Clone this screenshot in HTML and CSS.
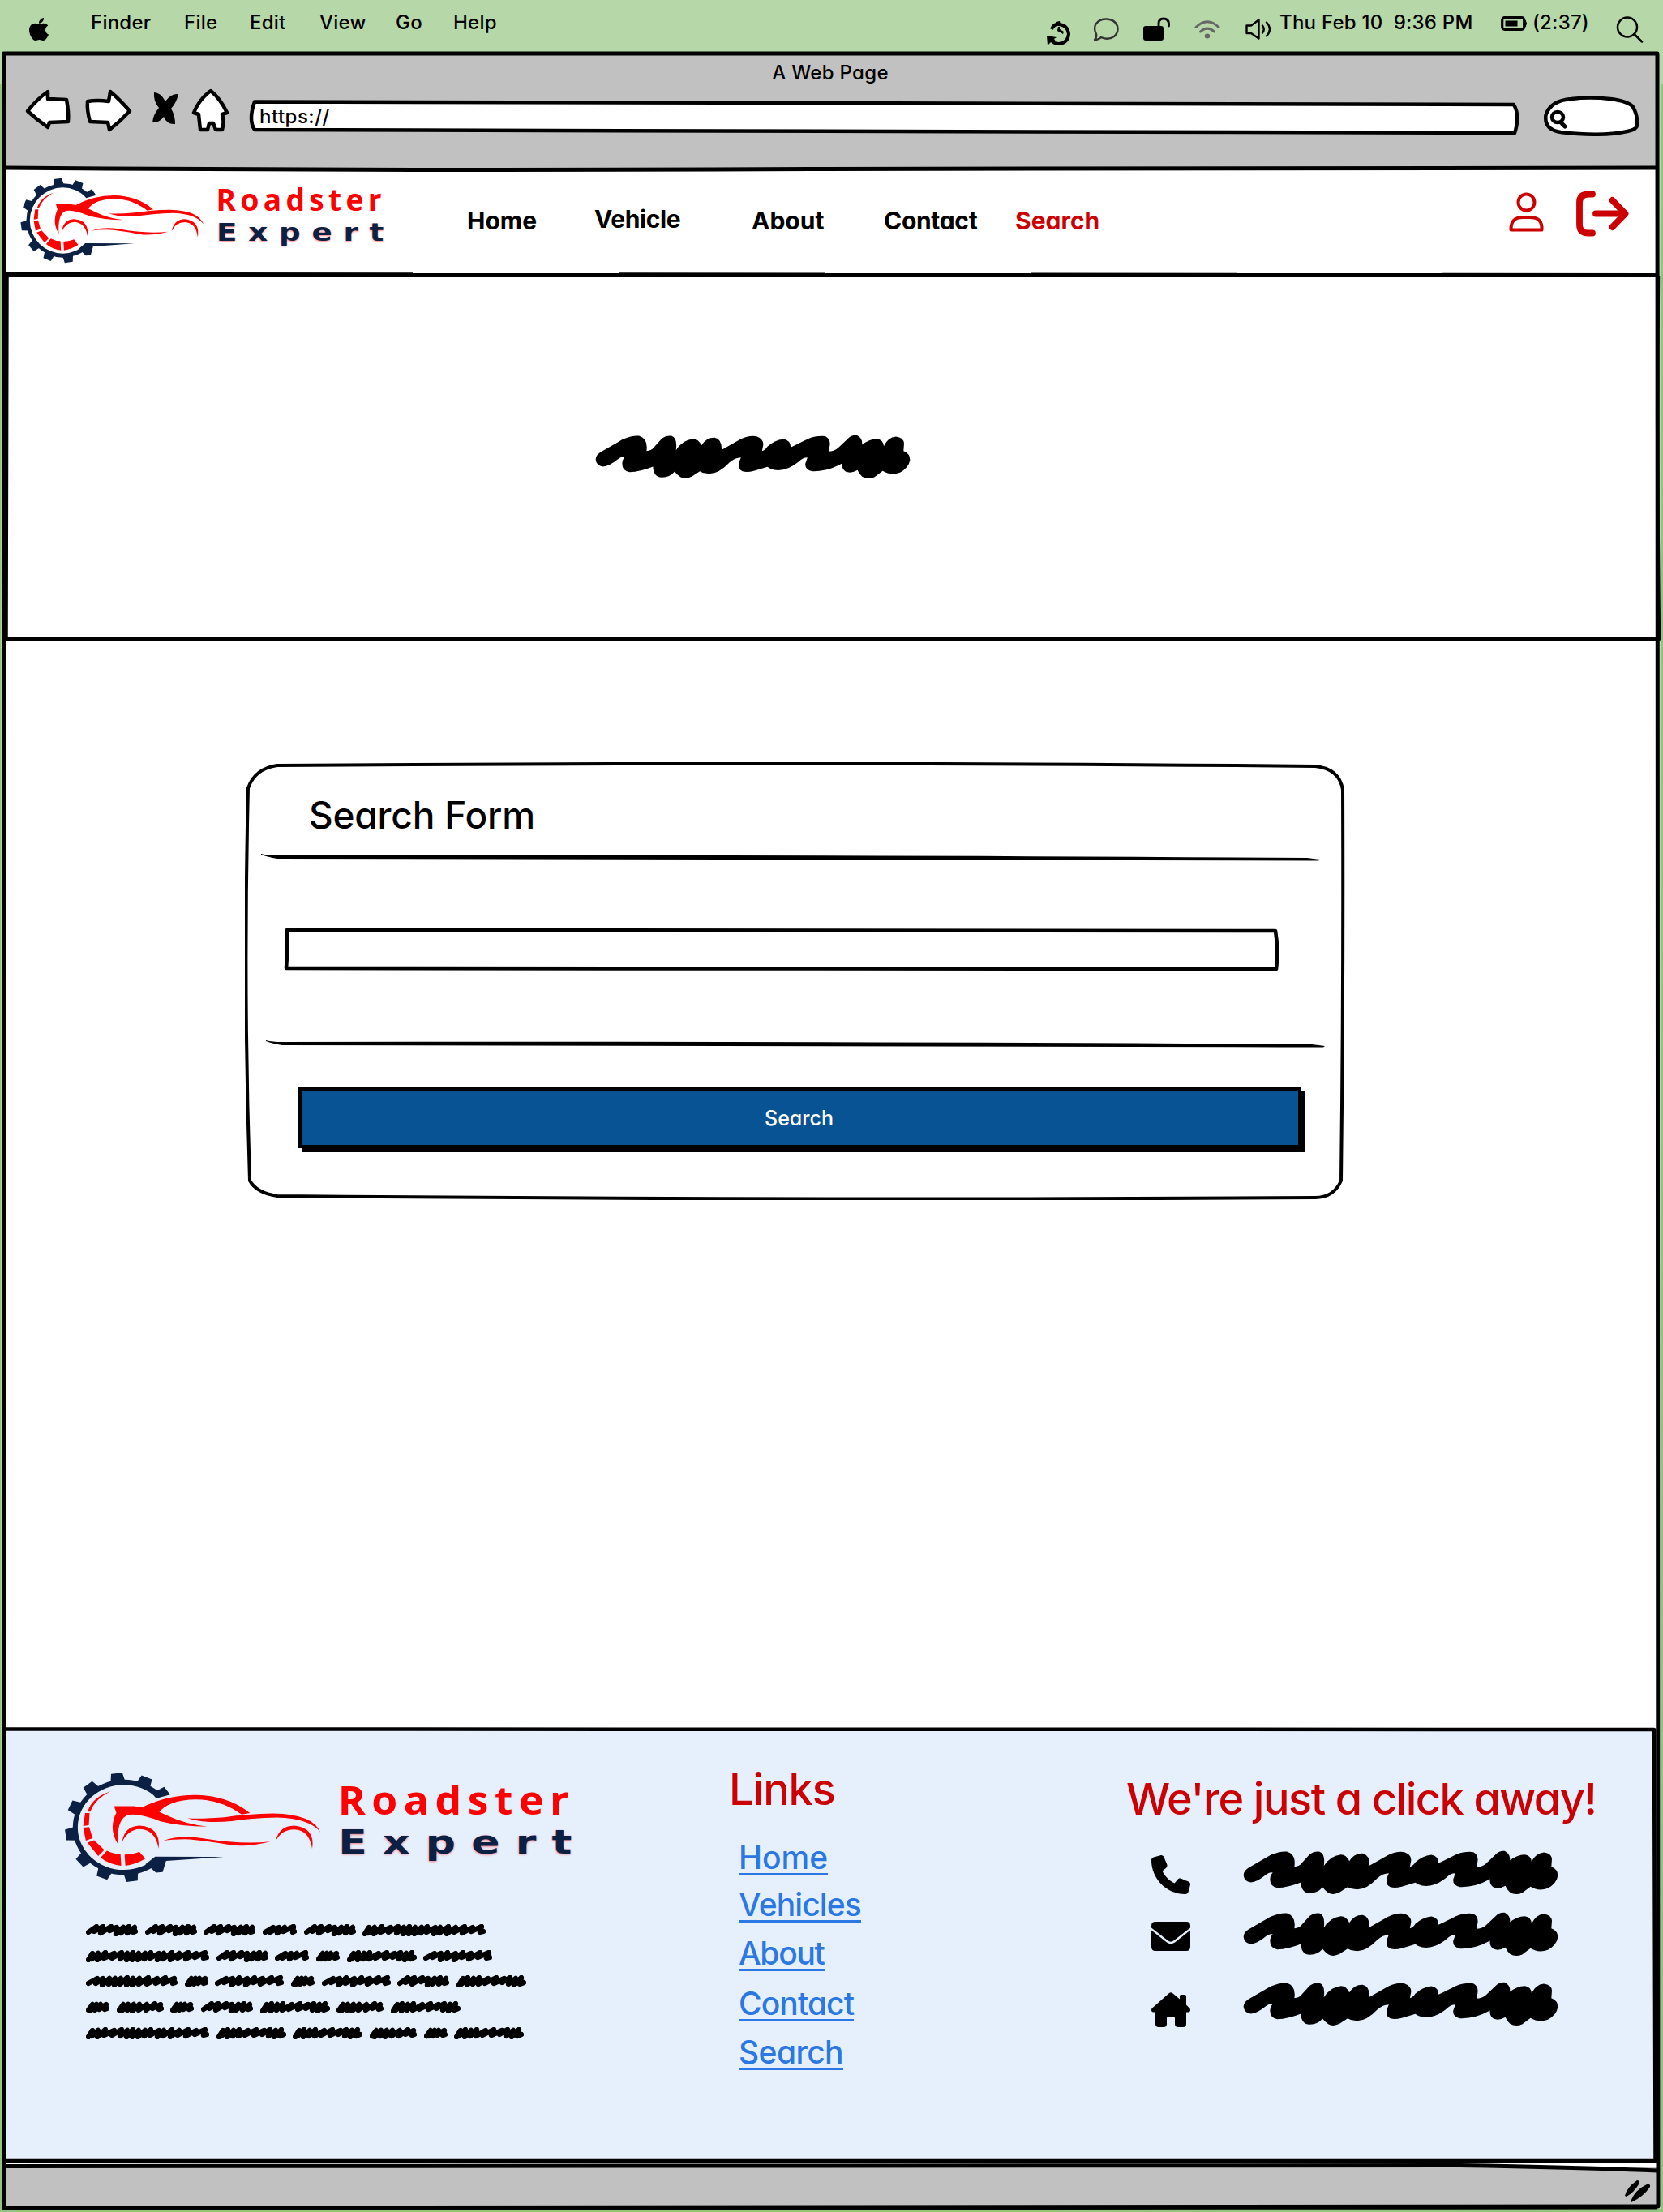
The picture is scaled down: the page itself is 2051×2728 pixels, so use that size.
FILE: index.html
```html
<!DOCTYPE html>
<html lang="en">
<head>
<meta charset="utf-8">
<title>Roadster Expert - Search</title>
<link rel="stylesheet" href="styles.css">
</head>
<body>
<svg class="sprite" aria-hidden="true">
  <symbol id="mark" viewBox="72 54 690 324" preserveAspectRatio="none">
    <g fill="#0b2043">
      <path d="M319 130A122 122 0 1 0 319 302L328 316A137 137 0 1 1 326 114Z"/>
      <path d="M306 116L322 110 340 100 356 122 319 133Z"/>
      <path d="M316 300L498 301 345 312 336 344 318 346 304 332 290 322Z"/>
      <path d="M361 196L389 201V231L361 236Z" transform="rotate(-97 233 216)"/>
      <path d="M361 196L389 201V231L361 236Z" transform="rotate(-67 233 216)"/>
      <path d="M361 196L389 201V231L361 236Z" transform="rotate(-128 233 216)"/>
      <path d="M361 196L389 201V231L361 236Z" transform="rotate(-156 233 216)"/>
      <path d="M361 196L389 201V231L361 236Z" transform="rotate(172 233 216)"/>
      <path d="M361 196L389 201V231L361 236Z" transform="rotate(139 233 216)"/>
      <path d="M361 196L389 201V231L361 236Z" transform="rotate(112 233 216)"/>
      <path d="M361 196L389 201V231L361 236Z" transform="rotate(82 233 216)"/>
    </g>
    <g fill="#f00">
      <path d="M198 113Q148 130 137 171L144 171Q157 134 198 113Z"/>
      <path d="M130 175L142 175 140 210 125 212Z"/>
      <path d="M125 217L141 215 150 247 132 254Z"/>
      <path d="M136 260L154 253 181 281 165 298Z"/>
      <path d="M171 303L188 283Q205 292 224 292L226 326Q193 322 171 303Z"/>
      <path d="M235 294Q257 294 274 286L290 306Q266 322 237 326Z"/>
      <path d="M280 159Q350 122 425 123 510 125 568 175L546 179Q490 136 425 136 350 137 325 175Z"/>
      <path d="M207 155H260Q315 162 350 183 400 208 458 214 385 214 330 199 275 175 245 180 212 192 218 265 191 222 213 174Z"/>
      <path d="M402 190Q440 192 500 187 560 177 630 176 735 178 755 230 725 190 640 188 570 190 520 198 450 206 402 190Z"/>
      <path d="M228 258Q235 212 275 211 332 215 325 277 317 223 275 221 245 222 228 258Z"/>
      <path d="M636 255Q645 212 685 211 742 217 733 278 726 224 685 222 652 222 636 255Z"/>
      <path d="M338 254Q380 238 440 247 540 266 622 257 560 274 515 266 440 252 395 250 360 250 338 254Z"/>
    </g>
  </symbol>
  <symbol id="scribble" viewBox="100 75 1175 170">
    <path d="M105 170Q105 150 130 138L205 95Q240 80 265 82 300 92 293 138 310 138 320 125L350 92Q365 80 385 82 408 90 402 135 425 97 465 93 485 93 496 117 515 88 545 89 572 95 571 134L640 95Q670 80 700 84 728 95 724 118L720 138Q732 135 740 122 765 98 800 94 825 98 826 125L890 93Q925 80 955 84 975 95 970 120L966 140Q985 140 1000 128L1035 95Q1050 78 1070 80 1092 90 1090 115 1115 94 1145 93 1168 96 1170 120 1185 88 1215 85 1243 88 1245 110L1243 138Q1268 148 1267 172 1262 200 1230 218 1195 230 1166 212L1135 235Q1110 245 1090 233 1078 222 1073 209 1050 222 1030 215 1014 205 1016 184 960 215 905 213 878 208 880 185L888 162Q870 162 855 178 810 215 765 208 750 205 740 197L690 212Q650 222 637 205 628 190 642 162 620 162 600 180 555 228 515 221 500 220 490 213L460 233Q435 245 418 234 405 225 397 214 380 235 350 236 318 235 317 196 270 215 230 216 203 212 203 185 203 170 213 160 200 157 185 170 155 195 132 196 107 192 105 170Z"/>
  </symbol>
  <symbol id="w29" viewBox="0 0 29 15"><path d="M3 11L8 4 6 11 13 4 11 11 18 4 16 10 25 4 23 10 26 9"/></symbol>
  <symbol id="w42" viewBox="0 0 42 15"><path d="M3 10L13 4 9 10 20 4 18 11 27 4 25 9 38 3 37 10 39 9"/></symbol>
  <symbol id="w58" viewBox="0 0 58 15"><path d="M3 11L8 4 6 12 14 4 13 11 21 4 19 12 28 4 27 11 37 4 36 11 47 3 44 9 54 4 52 10 55 9"/></symbol>
  <symbol id="w64" viewBox="0 0 64 15"><path d="M3 10L13 3 10 9 21 3 18 11 31 3 29 8 38 4 37 12 46 4 43 11 53 3 51 11 60 4 58 10 61 9"/></symbol>
  <symbol id="w85" viewBox="0 0 86 15"><path d="M3 12L8 4 6 11 14 3 13 12 21 4 20 11 28 3 27 11 39 4 35 10 49 3 46 10 59 4 56 9 66 3 64 11 73 4 71 12 80 3 78 11 83 9"/></symbol>
  <symbol id="w84" viewBox="0 0 85 15"><path d="M3 10L14 4 11 9 22 4 21 12 30 3 29 10 40 4 38 12 49 3 47 9 59 4 56 11 70 3 67 9 81 3 78 10 82 9"/></symbol>
  <symbol id="w113" viewBox="0 0 113 15"><path d="M3 10L14 4 12 10 21 4 20 12 29 4 28 11 36 4 35 12 43 4 42 11 51 3 50 12 58 4 57 12 66 4 65 11 77 3 75 11 88 4 86 10 98 3 95 10 109 4 107 10 110 9"/></symbol>
  <symbol id="w151" viewBox="0 0 152 15"><path d="M3 12L8 4 7 11 15 4 14 12 24 3 22 10 35 4 32 10 44 3 42 11 51 4 50 12 58 3 57 12 65 4 64 12 73 4 72 11 80 3 79 10 90 4 88 12 96 4 95 11 106 3 104 12 115 4 113 10 126 3 123 11 136 4 134 9 147 3 145 10 149 9"/></symbol>
</svg>

<div class="menubar">
  <svg class="ic apple" viewBox="4 32 376 448" preserveAspectRatio="none"><path d="M318.700 268.700c-.2-36.700 16.400-64.400 50-84.800-18.800-26.900-47.200-41.700-84.700-44.600-35.500-2.800-74.300 20.700-88.500 20.700-15 0-49.400-19.700-76.400-19.700C63.300 141.200 4 184.800 4 273.500q0 39.300 14.400 81.200c12.800 36.700 59 126.700 107.200 125.200 25.200-.6 43-17.900 75.800-17.900 31.800 0 48.300 17.900 76.400 17.900 48.600-.7 90.400-82.500 102.600-119.300-65.200-30.700-61.700-90-61.700-91.900zm-56.600-164.200c27.300-32.400 24.800-61.900 24-72.500-24.100 1.400-52 16.400-67.900 34.900-17.500 19.800-27.800 44.300-25.600 71.900 26.100 2 49.900-11.400 69.500-34.300z"/></svg>
  <span>Finder</span><span>File</span><span>Edit</span><span>View</span><span>Go</span><span>Help</span>
  <svg class="ic sync" viewBox="0 0 30 29"><path d="M6 9Q9 2 15 3 26 4 27 15 26 26 15 27 9 27 6 23" fill="none" stroke="#000" stroke-width="4"/><path d="M0 17L12 19 9 21 11 24 5 25 1 29ZM14 6L16 6 16 9 21 12 20 15 13 11ZM11 0L16 -1 17 4 11 5Z"/></svg>
  <svg class="ic bubble" viewBox="0 0 32 29"><path d="M2 27Q5 24 4 20 0 12 4 7 9 1 17 1.500 27 2 30 10 32 18 26 23 19 28 10 24 7 27 2 27Z" fill="none" stroke="#333" stroke-width="2.400" stroke-linejoin="round"/></svg>
  <svg class="ic lock" viewBox="0 0 33 30"><rect x="0" y="11" width="25" height="18" rx="3"/><path d="M19 12V8Q19 2 25 2T31.500 8V11" fill="none" stroke="#000" stroke-width="2.800" stroke-linecap="round"/></svg>
  <svg class="ic wifi" viewBox="0 0 32 23"><g fill="none" stroke="#666" stroke-width="3" stroke-linecap="round"><path d="M2 8.500Q16-5 30 8.500M7.500 14Q16 6 24.500 14"/></g><ellipse cx="16" cy="19.500" rx="3.300" ry="3" fill="#666"/></svg>
  <svg class="ic speaker" viewBox="0 0 32 26"><path d="M1.500 8.500H7L16.500 1.500V24.500L7 18H1.500Z" fill="none" stroke="#000" stroke-width="2.400" stroke-linejoin="round"/><path d="M21 8.500Q24.500 13 21 17.500M26 4.500Q34 13 26 21.500" fill="none" stroke="#000" stroke-width="2.400" stroke-linecap="round"/></svg>
  <span class="clock">Thu Feb 10&nbsp; 9:36 PM</span>
  <svg class="ic battery" viewBox="0 0 33 18"><rect x="1.700" y="1.700" width="27" height="14.600" rx="3" fill="none" stroke="#000" stroke-width="3.200"/><rect x="5.500" y="5.500" width="15" height="7"/><path d="M30 5Q33 9 30 13Z" stroke="#000"/></svg>
  <span>(2:37)</span>
  <svg class="ic find" viewBox="0 0 34 33"><circle cx="14" cy="13.500" r="12" fill="none" stroke="#000" stroke-width="2.500"/><path d="M22.500 22L32 31.500" fill="none" stroke="#000" stroke-width="2.500" stroke-linecap="round"/></svg>
</div>

<div class="chrome">
  <div class="page-title">A Web Page</div>
  <div class="toolbar">
    <svg viewBox="0 0 64 60"><path d="M6 29Q18 14 31 5V14L54 15Q57 30 56 42L33 43 31 49Q18 40 6 29Z" class="btn"/></svg>
    <svg viewBox="0 0 64 60"><path d="M6 17Q18 15 32 17L34 5Q46 15 58 29 46 42 33 52L31 43 9 42Q5 28 6 17Z" class="btn"/></svg>
    <svg viewBox="0 0 40 60"><path d="M6 6Q14 6 20 17 27 7 36 8 34 18 27 26 32 34 32 45 22 46 18 36 12 44 4 43 5 33 12 25 5 17 6 6Z"/></svg>
    <svg viewBox="0 0 52 60"><path d="M26 4Q38 14 46 31L40 33Q43 42 40 52H32L29 44H24L22 52H13L11 33 5 31Q12 14 26 4Z" class="btn"/></svg>
    <div class="address">
      <svg viewBox="0 0 1573 60"><path d="M10 17.500Q700 16 1563 21 1571 35 1564 56 700 57 10 52 2 40 10 17.500Z" class="field"/></svg>
      <span>https://</span>
    </div>
    <svg viewBox="0 0 125 60"><path d="M24 55Q3 52 5.500 34 11 16 37 14 60 11 85 14 108 17 113 24 119 34 118 47 117 52 106 54 75 61 24 55Z" class="field"/><ellipse cx="20" cy="36.500" rx="7" ry="6.500" fill="none" stroke="#000" stroke-width="4.500"/><path d="M24 43L29 48" stroke="#000" stroke-width="5" stroke-linecap="round"/></svg>
  </div>
</div>

<header class="header">
  <div class="logo">
    <svg><use href="#mark"/></svg>
    <div class="logo-text"><span class="logo-top">Roadster</span><span class="logo-low">Expert</span></div>
  </div>
  <a class="nav n1">Home</a><a class="nav n2">Vehicle</a><a class="nav n3">About</a><a class="nav n4">Contact</a><a class="nav n5 current">Search</a>
  <svg class="user" viewBox="0 0 44 49"><g fill="none" stroke="#c00" stroke-width="4" stroke-linejoin="round"><circle cx="21.500" cy="12.500" r="10"/><path d="M2.500 46.500Q2 31 17 31H26Q41.500 31 40.500 46.500Z"/></g></svg>
  <svg class="logout" viewBox="0 0 65 57"><path d="M20 4.500H15Q4 4.500 4 15V42Q4 52.500 15 52.500H20" fill="none" stroke="#c00" stroke-width="7.800" stroke-linecap="round"/><path d="M24 28.500H58M44.500 12L60.500 28.500 44.500 45" fill="none" stroke="#c00" stroke-width="7.800" stroke-linecap="round" stroke-linejoin="round"/></svg>
</header>

<section class="hero"><svg class="scribble"><use href="#scribble"/></svg></section>

<main class="main">
  <form class="card">
    <svg class="outline" viewBox="0 0 1360 540"><path d="M40 4Q750 -1 1320 5 1350 8 1354 34 1355 280 1352 516 1343 537 1320 537 700 541 40 535 14 531 6 516 -2 280 4 32 12 8 40 4Z"/></svg>
    <h1>Search Form</h1>
    <svg class="rule r1" viewBox="0 0 1306 9"><path d="M0 0Q8 2 20 2 700 1 1290 5L1306 7 1304 8.500Q700 7 20 6 8 4 0 1Z"/></svg>
    <div class="input"><svg viewBox="0 0 1232 58"><path d="M5 5Q600 3 1224 6 1228 30 1225 53 600 55 4 52 6 30 5 5Z"/></svg></div>
    <svg class="rule r2" viewBox="0 0 1306 9"><path d="M0 0Q8 2 20 2 700 1 1290 5L1306 7 1304 8.500Q700 7 20 6 8 4 0 1Z"/></svg>
    <button type="button">Search</button>
  </form>
</main>

<footer class="footer">
  <div class="about">
    <div class="logo logo-lg">
      <svg><use href="#mark"/></svg>
      <div class="logo-text"><span class="logo-top">Roadster</span><span class="logo-low">Expert</span></div>
    </div>
    <div class="lines">
      <p><svg width="64"><use href="#w64"/></svg><svg width="64"><use href="#w64"/></svg><svg width="64"><use href="#w64"/></svg><svg width="42"><use href="#w42"/></svg><svg width="64"><use href="#w64"/></svg><svg width="152"><use href="#w151"/></svg></p>
      <p><svg width="152"><use href="#w151"/></svg><svg width="64"><use href="#w64"/></svg><svg width="42"><use href="#w42"/></svg><svg width="29"><use href="#w29"/></svg><svg width="86"><use href="#w85"/></svg><svg width="85"><use href="#w84"/></svg></p>
      <p><svg width="113"><use href="#w113"/></svg><svg width="29"><use href="#w29"/></svg><svg width="85"><use href="#w84"/></svg><svg width="29"><use href="#w29"/></svg><svg width="85"><use href="#w84"/></svg><svg width="64"><use href="#w64"/></svg><svg width="86"><use href="#w85"/></svg></p>
      <p><svg width="29"><use href="#w29"/></svg><svg width="58"><use href="#w58"/></svg><svg width="29"><use href="#w29"/></svg><svg width="64"><use href="#w64"/></svg><svg width="86"><use href="#w85"/></svg><svg width="58"><use href="#w58"/></svg><svg width="86"><use href="#w85"/></svg></p>
      <p><svg width="152"><use href="#w151"/></svg><svg width="86"><use href="#w85"/></svg><svg width="86"><use href="#w85"/></svg><svg width="58"><use href="#w58"/></svg><svg width="29"><use href="#w29"/></svg><svg width="86"><use href="#w85"/></svg></p>
    </div>
  </div>
  <nav class="links">
    <h2>Links</h2>
    <a>Home</a><a>Vehicles</a><a>About</a><a>Contact</a><a>Search</a>
  </nav>
  <div class="contact">
    <h2>We're just a click away!</h2>
    <div class="row"><svg class="phone" viewBox="0 0 512 512"><path d="M164.900 24.600c-7.700-18.600-28-28.500-47.400-23.200l-88 24C12.100 30.200 0 46 0 64C0 311.400 200.600 512 448 512c18 0 33.800-12.100 38.600-29.500l24-88c5.300-19.400-4.600-39.700-23.200-47.400l-96-40c-16.300-6.800-35.200-2.100-46.300 11.600L304.700 368C234.300 334.700 177.300 277.700 144 207.300L193.300 167c13.700-11.200 18.400-30 11.600-46.300l-40-96z"/></svg><svg class="scribble"><use href="#scribble"/></svg></div>
    <div class="row mail-row"><svg class="mail" viewBox="0 0 48 36"><path d="M5 0H43Q48 0 48 5V7.500L28 23Q24 26.500 20 23L0 7.500V5Q0 0 5 0ZM0 10.500L19 25.500Q24 29 29 25.500L48 10.500V31Q48 36 43 36H5Q0 36 0 31Z"/></svg><svg class="scribble"><use href="#scribble"/></svg></div>
    <div class="row home-row"><svg class="home" viewBox="0 0 48 43"><path d="M22 1Q24-.5 26 1L35 8.500V5Q35 3 37 3H41Q43 3 43 5V15.500L47.500 20Q49 24 46 24.500H43V39Q43 43 39 43H33Q29 43 29 39V32Q29 30 27 30H21Q19 30 19 32V39Q19 43 15 43H9Q5 43 5 39V24.500H2Q-1 24 .5 20Z"/></svg><svg class="scribble"><use href="#scribble"/></svg></div>
  </div>
</footer>

<div class="statusbar"><svg viewBox="0 0 34 28"><path d="M0 19Q2 9 15 0 19 0 17 5 11 15 2 20ZM7 26Q12 12 27 5 32 4 31 8 23 20 8 27Z"/></svg></div>

<svg class="frame" viewBox="0 0 2051 2728">
  <path d="M2051 104V2728H0V104H2Q0 1500 2 2724H2048Q2049 1500 2048 104Z" fill="#93c47d" fill-rule="evenodd"/>
  <g fill="none" stroke="#000" stroke-width="5" stroke-linejoin="round">
    <path d="M4.500 66H2044Q2044 1500 2045 2721L5 2723Q5 900 4.500 66Z"/>
    <path d="M5 207Q500 211 1000 208.500T2043 207"/>
    <path d="M6 338.500Q1000 339 2046 339.500"/>
    <path d="M8.500 339Q9 560 7.500 788 1000 790 2046 788 2043 560 2045 340" stroke-width="4.500"/>
    <path d="M5 2132.500Q1000 2134 2040 2133 2041 2400 2041.500 2665H5" stroke-width="4.500"/>
    <path d="M5 2671.500Q1000 2669 1800 2670.500 1950 2673 2045 2677"/>
    <path d="M5 2723Q1000 2719 2044 2722"/>
  </g>
</svg>
</body>
</html>
```
FILE: styles.css
```css
* { box-sizing: border-box; }
body {
  margin: 0;
  width: 2051px;
  height: 2728px;
  position: relative;
  overflow: hidden;
  display: flex;
  flex-direction: column;
  background: #b6d7a8;
  color: #000;
  font-family: Inter, "Open Sans", sans-serif;
  font-size: 24px;
  font-weight: 500;
  font-feature-settings: "cv11";
}
svg { display: block; }
h1, h2, p { margin: 0; }
.sprite { position: absolute; width: 0; height: 0; }
.frame { position: absolute; inset: 0; width: 2051px; height: 2728px; pointer-events: none; }

.menubar {
  flex: none;
  height: 66px;
  padding-left: 36px;
  display: grid;
  grid-template-columns: 76px 115px 81px 86px 94px 71px 732px 57px 62px 63px 63px 42px 273px 39px 103px 55px;
  align-items: start;
  line-height: 55px;
  letter-spacing: .24px;
  white-space: nowrap;
}
.apple { width: 24px; height: 28px; margin-top: 22px; }
.sync { width: 30px; height: 29px; margin-top: 27px; overflow: visible; }
.bubble { width: 32px; height: 29px; margin-top: 22px; }
.lock { width: 33px; height: 30px; margin-top: 21px; }
.wifi { width: 32px; height: 23px; margin-top: 25px; }
.speaker { width: 32px; height: 26px; margin-top: 23px; }
.battery { width: 33px; height: 18px; margin-top: 20px; }
.find { width: 34px; height: 33px; margin-top: 20px; }

.chrome {
  flex: none;
  height: 142px;
  margin: 0 7px 0 4px;
  padding-top: 2px;
  background: #c1c1c1;
}
.page-title { height: 40px; line-height: 43px; text-align: center; letter-spacing: .3px; }
.toolbar {
  display: grid;
  grid-template-columns: 74px 82px 50px 70px 1597px 125px;
  padding-left: 24px;
}
.toolbar svg { height: 60px; }
.toolbar > svg:nth-child(1), .toolbar > svg:nth-child(2) { width: 64px; }
.toolbar > svg:nth-child(3) { width: 40px; }
.toolbar > svg:nth-child(4) { width: 52px; }
.btn { fill: #fff; stroke: #000; stroke-width: 4.5; stroke-linejoin: round; }
.field { fill: #fff; stroke: #000; stroke-width: 4.5; stroke-linejoin: round; }
.address { position: relative; width: 1573px; height: 60px; padding-left: 16px; line-height: 71px; letter-spacing: .5px; }
.address svg { position: absolute; inset: 0; width: 1573px; }
.address span { position: relative; }

.header {
  flex: none;
  height: 131px;
  margin: 0 7px 0 4px;
  padding-left: 20px;
  background: #fff;
  display: grid;
  grid-template-columns: 552px 157px 194px 163px 162px 609px 83px 65px;
  align-items: start;
}
.logo { width: 452px; height: 108px; margin-top: 10px; display: flex; gap: 13px; }
.logo svg { width: 230px; height: 108px; }
.logo-text { display: flex; flex-direction: column; white-space: nowrap; }
.logo-top { font: 700 37px/36px "Open Sans", sans-serif; letter-spacing: 5.4px; color: #f00; margin-top: 10px; }
.logo-low {
  font: 700 31px/32px "DejaVu Sans", sans-serif;
  letter-spacing: 11.5px;
  color: #0b2043;
  text-shadow: 0 1px 2px rgba(255, 0, 0, .5);
  transform: scaleX(1.2);
  transform-origin: 0 0;
  margin-top: 6px;
}
.nav { font-size: 30px; font-weight: 700; line-height: 129px; white-space: nowrap; }
.n2 { line-height: 125px; letter-spacing: -.4px; }
.n4 { letter-spacing: -.3px; }
.current { color: #c00; }
.user { width: 44px; height: 49px; margin-top: 29px; }
.logout { width: 65px; height: 57px; margin-top: 27px; }

.hero {
  flex: none;
  height: 450px;
  margin: 0 5px 0 6px;
  padding: 196px 0 0 727px;
  background: #fff;
}
.scribble { width: 392px; height: 57px; }

.main { flex: none; height: 1343px; margin: 0 7px 0 4px; padding: 151px 0 0 298px; background: #fff; }
.card { position: relative; width: 1360px; height: 540px; padding-top: 37px; }
.outline { position: absolute; inset: 0; width: 1360px; height: 540px; }
.outline path { fill: none; stroke: #000; stroke-width: 4; }
.card h1 { margin-left: 79px; height: 76px; line-height: 56px; font-size: 46px; font-weight: 500; letter-spacing: -.2px; }
.rule { width: 1306px; height: 9px; }
.r1 { margin-left: 20px; }
.r2 { margin-left: 26px; }
.input { margin: 80px 0 83px 47px; }
.input svg { width: 1232px; height: 58px; }
.input path { fill: #fff; stroke: #000; stroke-width: 4.6; stroke-linejoin: round; }
.card button {
  display: block;
  width: 1237px;
  height: 75px;
  margin: 49px 0 0 66px;
  padding: 3px 8px 1px 6px;
  border: 4px solid #000;
  background: #085394;
  box-shadow: 5px 5px 0 #000;
  color: #fff;
  font: 500 25px/1 Inter, sans-serif;
  font-feature-settings: "cv11";
}

.footer {
  flex: none;
  height: 534px;
  margin: 0 9px 0 4px;
  padding-left: 74px;
  background: #e6f0fd;
  display: grid;
  grid-template-columns: 821px 488px 1fr;
  align-items: start;
}
.logo-lg { margin: 52px 0 0; transform: scale(1.396, 1.29); transform-origin: 0 0; }
.lines { margin: 81px 0 0 28px; display: flex; flex-direction: column; gap: 16.700px; }
.lines p { display: flex; gap: 8.700px; }
.lines svg { height: 15px; flex: none; }
.sprite symbol[id^="w"] path { fill: none; stroke: #000; stroke-width: 6.4; stroke-linecap: round; stroke-linejoin: round; }
h2 { color: #c00; font-size: 54px; font-weight: 500; line-height: 66px; white-space: nowrap; }
.links { padding-top: 42px; display: flex; flex-direction: column; align-items: flex-start; }
.links h2 { letter-spacing: -1px; height: 92px; }
.links a {
  margin-left: 12px;
  color: #2b78e4;
  font-size: 39px;
  line-height: 49px;
  height: 47px;
  border-bottom: 3px solid #2b78e4;
  margin-bottom: 11px;
}
.links a:nth-of-type(2) { margin-bottom: 13px; letter-spacing: -.9px; }
.links a:nth-of-type(3) { margin-bottom: 15px; letter-spacing: -1.300px; }
.links a:nth-of-type(4) { margin-bottom: 13px; letter-spacing: -.9px; }
.links a:nth-of-type(5) { letter-spacing: -.6px; }
.contact { padding-top: 54px; }
.contact h2 { height: 95px; margin-left: 2px; letter-spacing: -1.400px; }
.row { display: grid; grid-template-columns: 112px 392px; align-items: start; padding-left: 33px; height: 76px; }
.home-row { margin-top: 9.500px; }
.phone { width: 48px; height: 48px; margin-top: 7px; }
.mail { width: 48px; height: 36px; margin-top: 13px; }
.home { width: 48px; height: 43px; margin-top: 14px; }

.statusbar { flex: none; height: 60px; margin: 0 7px 0 4px; padding: 23px 0 0 2000px; background: linear-gradient(#fff 6px, #c1c1c1 6px); }
.statusbar svg { width: 34px; height: 28px; }
```
